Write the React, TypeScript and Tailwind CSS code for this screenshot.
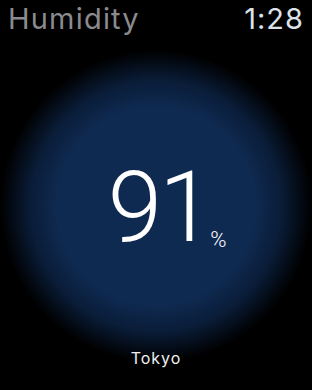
export default function App() {
  return (
    <div className="relative flex h-[390px] w-[312px] flex-col overflow-hidden bg-black font-['Inter','Roboto',sans-serif] bg-[radial-gradient(circle_at_156px_206px,#0f2a51_0px,#0f2a51_98px,#0a1d39_125px,#000_156px)]">
      <header className="flex items-start justify-between px-2 pt-[1px]">
        <span className="text-[29px] leading-[36px] tracking-[1.2px] text-[#8b8b8f]">Humidity</span>
        <span className="text-[29px] leading-[36px] tracking-[1px] text-[#dde2ea]">1:28</span>
      </header>
      <main className="flex flex-1 items-center justify-center pl-[6px] pt-[30px]">
        <div className="relative text-white">
          <span className="block font-['Roboto',sans-serif] text-[98px] font-light leading-none tracking-[-3px]">91</span>
          <span className="absolute bottom-[6px] left-full font-['Roboto',sans-serif] text-[22px] font-light leading-none">%</span>
        </div>
      </main>
      <footer className="flex justify-center pb-[22px]">
        <span className="text-[16px] leading-[20px] tracking-[1px] text-[#f0f0f0]">Tokyo</span>
      </footer>
    </div>
  );
}
